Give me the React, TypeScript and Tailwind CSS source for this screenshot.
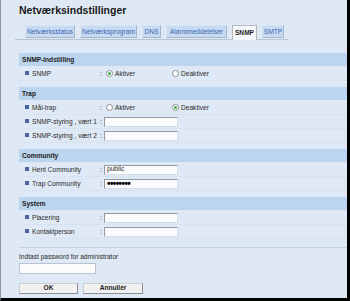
import React from 'react';

const tabs = [
  { label: 'Netværksstatus', w: 'w-[50px]' },
  { label: 'Netværksprogram', w: 'w-[57px]' },
  { label: 'DNS', w: 'w-[19px]' },
  { label: 'Alarmmeddelelser', w: 'w-[61px]' },
  { label: 'SNMP', w: 'w-[25px]', active: true },
  { label: 'SMTP', w: 'w-[22px]' },
];

const Radio: React.FC<{ checked?: boolean; label: string }> = ({ checked, label }) => (
  <div className="flex items-center w-[66px]">
    <span className="w-[7px] h-[7px] rounded-full border border-[#8a8f96] bg-white flex items-center justify-center mr-[2px]">
      {checked && <span className="w-[3px] h-[3px] rounded-full bg-[#3fae3f]" />}
    </span>
    <span>{label}</span>
  </div>
);

const Input: React.FC<{ value?: string; password?: boolean }> = ({ value, password }) => (
  <div className="w-[74px] h-[10px] bg-[#fbfbfb] border border-t-[#8e9aa6] border-l-[#8e9aa6] border-r-[#d6dde6] border-b-[#d6dde6] flex items-center pl-[2px] leading-none">
    {password ? <span className="text-[10px] font-bold text-black tracking-[-0.6px]">••••••••</span> : value}
  </div>
);

const Row: React.FC<{ label: string; children: React.ReactNode }> = ({ label, children }) => (
  <div className="h-[14px] flex items-center pl-[6px] border-b border-dotted border-[#cfdcec]">
    <div className="w-[75px] flex items-center">
      <span className="w-[4px] h-[4px] bg-[#4b63a6] mr-[3px]" />
      <span>{label}</span>
    </div>
    <span className="w-[4px]">:</span>
    {children}
  </div>
);

const Section: React.FC<{ title: string; children: React.ReactNode }> = ({ title, children }) => (
  <div>
    <div className="h-[13px] bg-[#bcd5ee] pl-[3px] flex items-center font-bold text-[#1c1c1c]">{title}</div>
    <div className="pt-[1px] pb-[6px]">{children}</div>
  </div>
);

export default function App() {
  return (
    <div className="w-[350px] h-[301px] bg-[#dee9f5] border-l border-l-[#8c96a0] border-r-[3px] border-r-black border-b-[3px] border-b-black font-['Liberation_Sans',Arial,sans-serif] text-[6.6px] text-[#2a2a2a] overflow-hidden">
      <div className="pl-[18px] pt-[4px] h-[16px] text-[10.5px] leading-[12px] font-bold text-[#1a1a1a]">
        Netværksindstillinger
      </div>

      <div className="mt-[9px] ml-[14px] w-[273px] h-[15px] flex items-end border-b border-[#b7c4d3] pl-[10px] gap-[5px]">
        {tabs.map((t) =>
          t.active ? (
            <div
              key={t.label}
              className={`${t.w} h-[15px] -mb-px bg-[#f5f8fb] border border-[#b3b8be] border-b-0 flex items-center justify-center font-bold text-[#1f1f1f]`}
            >
              {t.label}
            </div>
          ) : (
            <div
              key={t.label}
              className={`${t.w} h-[13px] mb-px bg-[#c6dbf2] border border-[#d8e4f2] border-r-[#a9b6c6] border-b-[#a9b6c6] flex items-center justify-center text-[#3d62b0]`}
            >
              {t.label}
            </div>
          )
        )}
      </div>

      <div className="ml-[18px] mt-[13px]">
        <Section title="SNMP-indstilling">
          <Row label="SNMP">
            <div className="flex items-center ml-[2px]">
              <Radio checked label="Aktiver" />
              <Radio label="Deaktiver" />
            </div>
          </Row>
        </Section>
        <Section title="Trap">
          <Row label="Mål-trap">
            <div className="flex items-center ml-[2px]">
              <Radio label="Aktiver" />
              <Radio checked label="Deaktiver" />
            </div>
          </Row>
          <Row label="SNMP-styring , vært 1">
            <Input />
          </Row>
          <Row label="SNMP-styring , vært 2">
            <Input />
          </Row>
        </Section>
        <Section title="Community">
          <Row label="Hent Community">
            <Input value="public" />
          </Row>
          <Row label="Trap Community">
            <Input password />
          </Row>
        </Section>
        <Section title="System">
          <Row label="Placering">
            <Input />
          </Row>
          <Row label="Kontaktperson">
            <Input />
          </Row>
        </Section>

        <div className="mt-[2px] border-t border-[#c2d0e0] pt-[4px]">
          <div className="h-[9px] leading-[9px]">Indtast password for administrator</div>
          <div className="mt-[2px] w-[77px] h-[11px] bg-[#fbfbfb] border border-[#b9c3cf]" />
          <div className="mt-[9px] flex gap-[5px]">
            <button className="w-[59px] h-[11px] bg-[#f1f1f1] border border-[#c9ced4] border-b-[#8c9096] border-r-[#8c9096] font-bold text-[#1a1a1a] leading-none">
              OK
            </button>
            <button className="w-[60px] h-[11px] bg-[#f1f1f1] border border-[#c9ced4] border-b-[#8c9096] border-r-[#8c9096] font-bold text-[#1a1a1a] leading-none">
              Annullér
            </button>
          </div>
        </div>
      </div>
    </div>
  );
}
